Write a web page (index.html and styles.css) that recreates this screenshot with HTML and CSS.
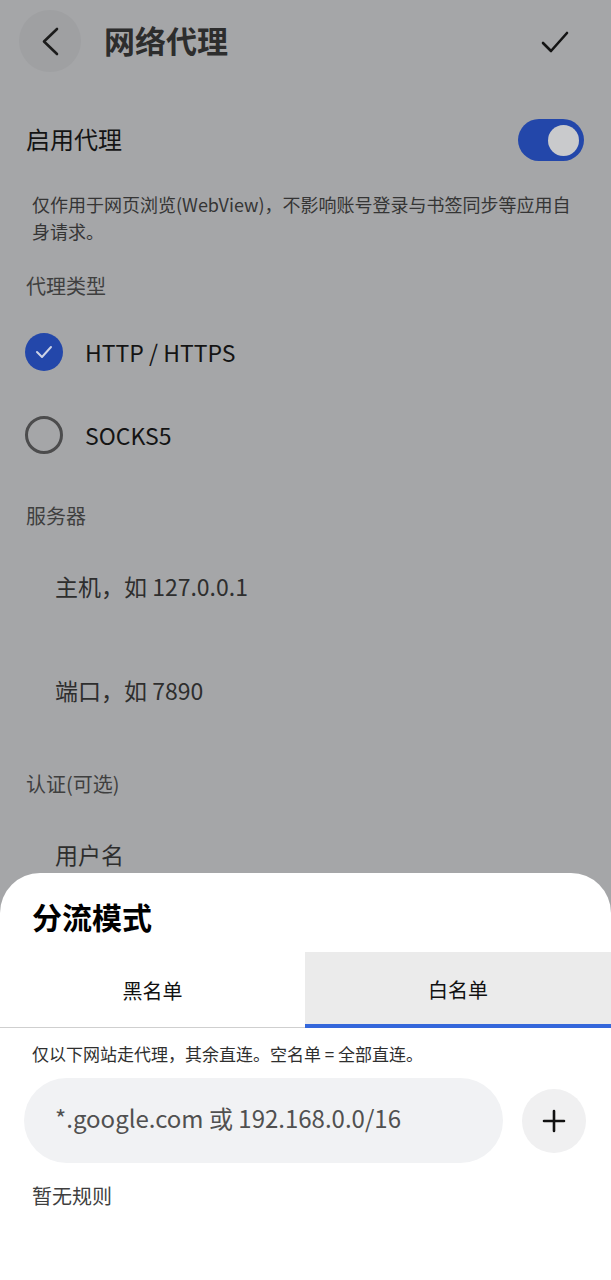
FILE: index.html
```html
<!DOCTYPE html>
<html lang="zh-CN">
<head>
    <meta charset="UTF-8">
    <meta name="viewport" content="width=device-width, initial-scale=1.0">
    <title>网络代理</title>
    <link rel="stylesheet" href="styles.css">
</head>
<body>
    <div class="page">
        <div class="top-bar">
            <button class="back-btn" aria-label="返回">
                <svg width="62" height="62" viewBox="0 0 62 62">
                    <path d="M38 19 L25 31.5 L38 44" fill="none" stroke="#1c1c1c" stroke-width="2.6" stroke-linecap="round" stroke-linejoin="round"/>
                </svg>
            </button>
            <h1 class="title">网络代理</h1>
            <button class="save-btn" aria-label="保存">
                <svg width="48" height="48" viewBox="0 0 48 48">
                    <path d="M12 26 L20 34 L36 16" fill="none" stroke="#141414" stroke-width="2.6" stroke-linecap="round" stroke-linejoin="round"/>
                </svg>
            </button>
        </div>

        <div class="content">
            <div class="switch-row">
                <span class="switch-label">启用代理</span>
                <div class="switch on"><div class="thumb"></div></div>
            </div>
            <p class="hint">仅作用于网页浏览(WebView)，不影响账号登录与书签同步等应用自身请求。</p>

            <div class="section-label">代理类型</div>
            <div class="radio-group">
                <div class="radio-row">
                    <span class="radio checked">
                        <svg width="38" height="38" viewBox="0 0 38 38">
                            <path d="M12 19 L17 24 L26 14" fill="none" stroke="#cdd3e6" stroke-width="2" stroke-linecap="round" stroke-linejoin="round"/>
                        </svg>
                    </span>
                    <span class="radio-text">HTTP / HTTPS</span>
                </div>
                <div class="radio-row">
                    <span class="radio"></span>
                    <span class="radio-text">SOCKS5</span>
                </div>
            </div>

            <div class="section-label server-label">服务器</div>
            <div class="field"><input type="text" placeholder="主机，如 127.0.0.1"></div>
            <div class="field second"><input type="text" placeholder="端口，如 7890"></div>

            <div class="section-label auth-label">认证(可选)</div>
            <div class="field"><input type="text" placeholder="用户名"></div>
        </div>
    </div>

    <div class="sheet">
        <h2 class="sheet-title">分流模式</h2>
        <div class="tabs">
            <div class="tab">黑名单</div>
            <div class="tab active">白名单</div>
        </div>
        <p class="sheet-hint">仅以下网站走代理，其余直连。空名单 = 全部直连。</p>
        <div class="rule-row">
            <input class="rule-input" type="text" placeholder="*.google.com 或 192.168.0.0/16">
            <button class="add-btn" aria-label="添加">
                <svg width="64" height="64" viewBox="0 0 64 64">
                    <path d="M32 22 V42 M22 32 H42" fill="none" stroke="#111" stroke-width="2.6" stroke-linecap="round"/>
                </svg>
            </button>
        </div>
        <div class="empty">暂无规则</div>
    </div>
</body>
</html>
```

FILE: styles.css
```css
/* Styles globaux */
body {
    margin: 0;
    padding: 0;
    width: 611px;
    height: 1280px;
    overflow: hidden;
    position: relative;
    background: #a5a6a8;
    font-family: "Noto Sans CJK SC", "Noto Sans", sans-serif;
    color: #141414;
}
button {
    border: none;
    background: none;
    padding: 0;
    cursor: pointer;
}
.top-bar {
    display: flex;
    align-items: center;
    height: 62px;
    padding: 10px 32px 12px 19px;
}
.back-btn {
    width: 62px;
    height: 62px;
    border-radius: 50%;
    background: #9fa0a2;
    display: flex;
}
.title {
    margin: 0 0 0 23px;
    font-size: 31px;
    line-height: 40px;
    font-weight: bold;
    color: #2d2d2d;
    position: relative;
    top: -1px;
}
.save-btn {
    margin-left: auto;
    width: 48px;
    height: 48px;
    display: flex;
}
.content {
    padding: 0 27px 0 26px;
}
.switch-row {
    display: flex;
    align-items: center;
    justify-content: space-between;
    margin-top: 35px;
    height: 42px;
}
.switch-label {
    font-size: 24px;
    line-height: 32px;
    color: #141414;
    margin-top: -3px;
}
.switch {
    width: 66px;
    height: 42px;
    border-radius: 21px;
    background: #2347aa;
    display: flex;
    align-items: center;
    justify-content: flex-end;
    padding-right: 5px;
    box-sizing: border-box;
}
.thumb {
    width: 31px;
    height: 31px;
    border-radius: 50%;
    background: #c9cacc;
}
.hint {
    margin: 30px 0 0 6px;
    font-size: 18px;
    line-height: 27px;
    color: #353535;
}
.section-label {
    margin-top: 27px;
    font-size: 20px;
    line-height: 28px;
    color: #3f3f3f;
}
.radio-group {
    margin-top: 10px;
}
.radio-row {
    display: flex;
    align-items: center;
    height: 83px;
}
.radio {
    width: 38px;
    height: 38px;
    border-radius: 50%;
    border: 3px solid #4c4c4d;
    box-sizing: border-box;
    flex-shrink: 0;
    display: flex;
    margin-left: -1px;
}
.radio.checked {
    border: none;
    background: #2347aa;
}
.radio-text {
    margin-left: 22px;
    font-size: 23px;
    color: #141414;
}
.server-label {
    margin-top: 26px;
}
.auth-label {
    margin-top: 40px;
}
.field {
    margin-top: 16px;
    height: 80px;
    display: flex;
    align-items: center;
    padding-left: 29px;
}
.field.second {
    margin-top: 24px;
}
.field input {
    border: none;
    background: transparent;
    outline: none;
    font-family: inherit;
    font-size: 23px;
    width: 100%;
    padding: 0;
}
.field input::placeholder {
    color: #2e2e2e;
}

/* Bottom sheet */
.sheet {
    position: absolute;
    left: 0;
    right: 0;
    bottom: 0;
    height: 407px;
    background: #fff;
    border-radius: 40px 40px 0 0;
}
.sheet-title {
    margin: 23px 0 0 32px;
    font-size: 30px;
    line-height: 40px;
    font-weight: bold;
    color: #000;
}
.tabs {
    display: grid;
    grid-template-columns: 305px 1fr;
    margin-top: 16px;
    height: 76px;
}
.tab {
    display: flex;
    align-items: center;
    justify-content: center;
    font-size: 20px;
    color: #111;
    border-bottom: 1px solid #cfcfcf;
    padding-top: 2px;
}
.tab.active {
    background: #ebebeb;
    border-bottom: 4px solid #3467db;
}
.sheet-hint {
    margin: 14px 0 0 32px;
    font-size: 17px;
    line-height: 24px;
    color: #2f2f2f;
}
.rule-row {
    display: flex;
    align-items: center;
    gap: 19px;
    margin-top: 12px;
    padding: 0 25px 0 24px;
}
.rule-input {
    flex: 1;
    min-width: 0;
    height: 85px;
    box-sizing: border-box;
    border: none;
    outline: none;
    border-radius: 43px;
    background: #f1f2f4;
    padding: 0 0 6px 31px;
    font-family: inherit;
    font-size: 24px;
}
.rule-input::placeholder {
    color: #505050;
}
.add-btn {
    width: 64px;
    height: 64px;
    border-radius: 50%;
    background: #f0f0f1;
    display: flex;
    flex-shrink: 0;
}
.empty {
    margin: 19px 0 0 32px;
    font-size: 20px;
    line-height: 28px;
    color: #3f3f3f;
}
```
